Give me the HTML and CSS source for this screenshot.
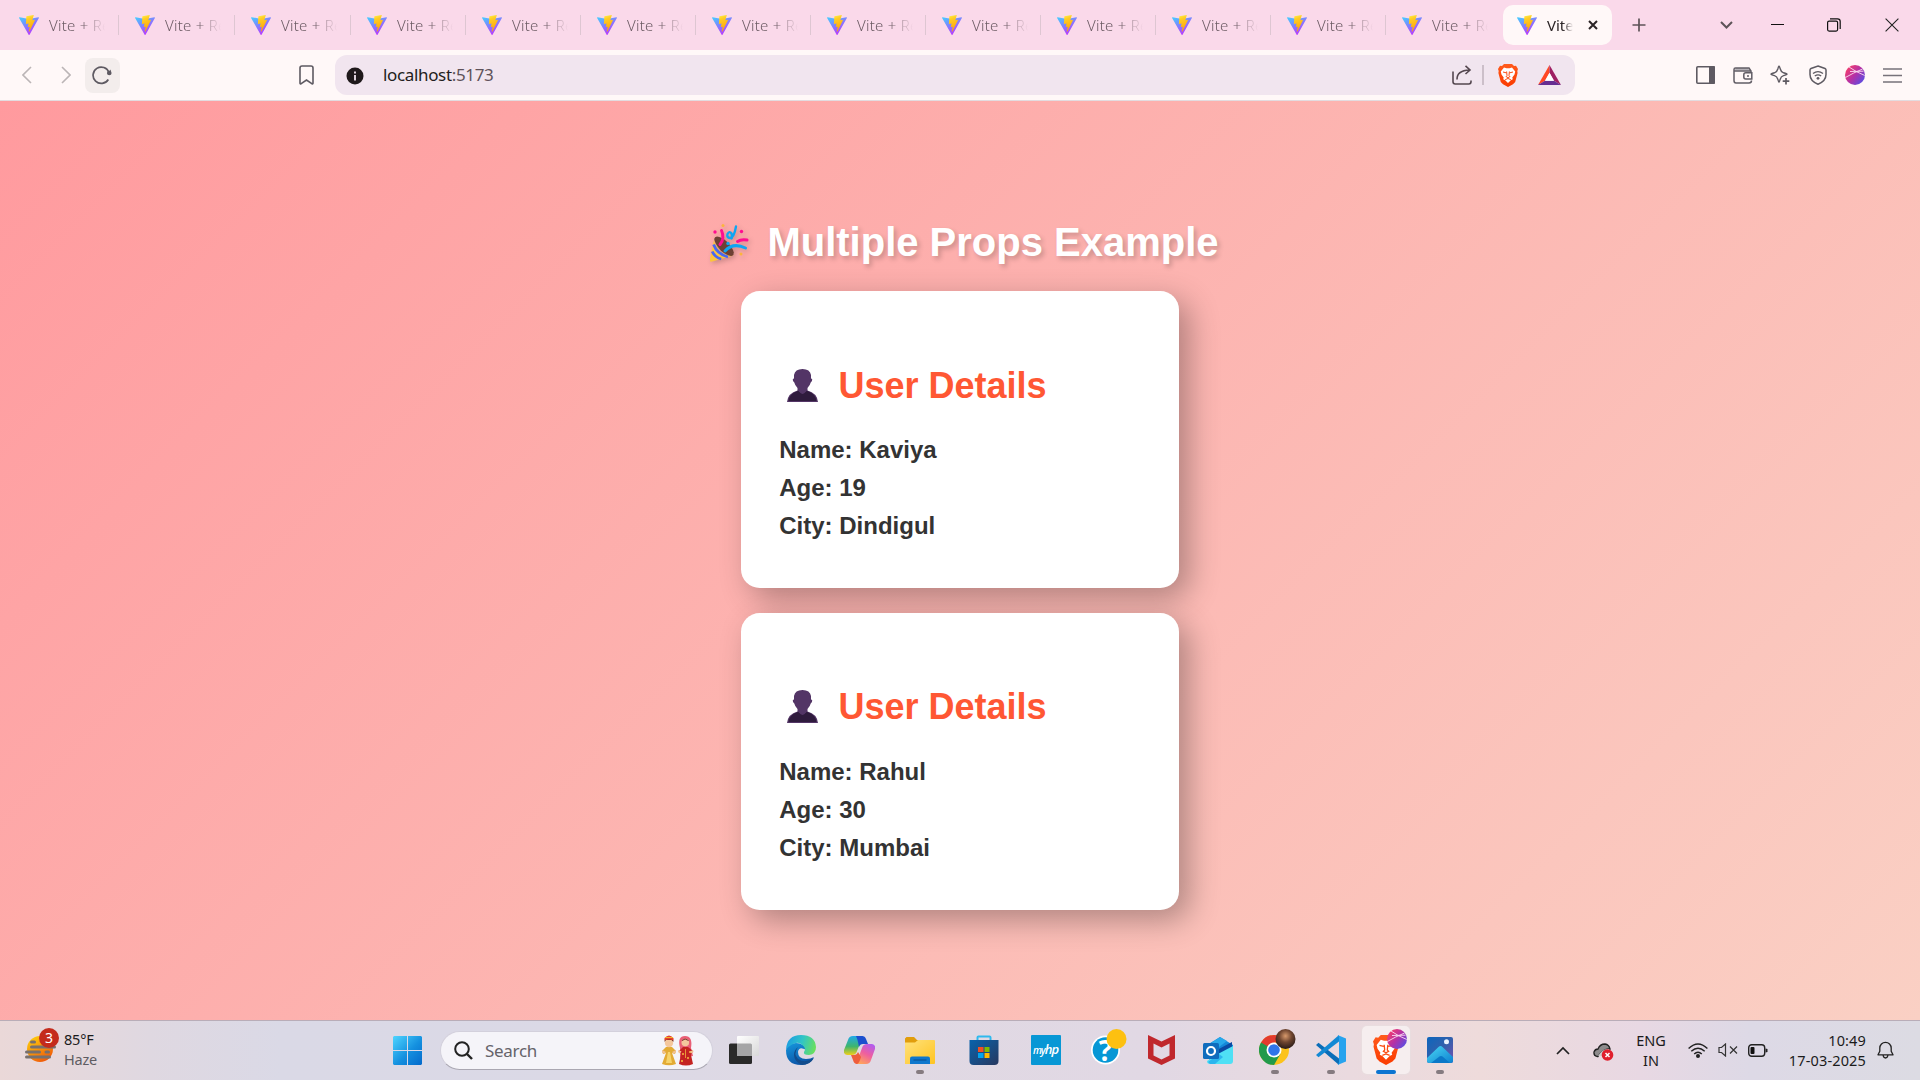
FILE: index.html
```html
<!DOCTYPE html>
<html lang="en">
<head>
<meta charset="utf-8">
<title>Vite + React</title>
<link rel="stylesheet" href="styles.css">
</head>
<body>
<svg class="defs" width="0" height="0" aria-hidden="true">
  <defs>
    <linearGradient id="va" x1="0" y1="0" x2=".6" y2="1"><stop offset="0" stop-color="#41d1ff"/><stop offset="1" stop-color="#bd34fe"/></linearGradient>
    <linearGradient id="vb" x1=".4" y1="0" x2=".6" y2="1"><stop offset="0" stop-color="#ffea40"/><stop offset=".2" stop-color="#ffcd25"/><stop offset="1" stop-color="#ffa000"/></linearGradient>
    <linearGradient id="sph" x1="0" y1=".1" x2="1" y2=".9"><stop offset="0" stop-color="#ff3f62"/><stop offset=".5" stop-color="#b431a6"/><stop offset="1" stop-color="#4b52ee"/></linearGradient>
    <linearGradient id="lionbg" x1="0" y1="0" x2="0" y2="1"><stop offset="0" stop-color="#ff5a1c"/><stop offset="1" stop-color="#fb3b00"/></linearGradient>
    <symbol id="vite" viewBox="0 0 256 257">
      <path fill="url(#va)" d="M255.153 37.938L134.897 252.976c-2.483 4.44-8.862 4.466-11.382.048L.875 37.958c-2.746-4.814 1.371-10.646 6.827-9.67l120.385 21.517a6.537 6.537 0 0 0 2.322-.004l117.867-21.483c5.438-.991 9.574 4.796 6.877 9.62Z"/>
      <path fill="url(#vb)" d="M185.432.063L96.44 17.501a3.268 3.268 0 0 0-2.634 3.014l-5.474 92.456a3.268 3.268 0 0 0 3.997 3.378l24.777-5.718c2.318-.535 4.413 1.507 3.936 3.838l-7.361 36.047c-.495 2.426 1.782 4.5 4.151 3.78l15.304-4.649c2.372-.72 4.652 1.36 4.15 3.788l-11.698 56.621c-.732 3.542 3.979 5.473 5.943 2.437l1.313-2.028l72.516-144.72c1.215-2.423-.88-5.186-3.54-4.672l-25.505 4.922c-2.396.462-4.435-1.77-3.759-4.114l16.646-57.705c.677-2.35-1.37-4.583-3.769-4.113Z"/>
    </symbol>
    <symbol id="lion" viewBox="0 0 20 23">
      <path fill="url(#lionbg)" d="M6 0h8l2 2 2-.3L20 5l-.7 2 .3 2-2.4 9-2.2 2.300L10 23l-5-2.700L2.800 18 .4 9l.3-2L0 5l2-3.300L4 2z"/>
      <path fill="#fff" d="M6 3.600l2.500.7h3l2.500-.7 3.200 4-.7 3-2.200 3 .5 1.600-2 1L10 19l-2.800-2.800-2-1 .5-1.600-2.200-3-.7-3z"/>
      <path fill="none" stroke="#fb4b10" stroke-width="1" d="M5 8l3.200.8M15 8l-3.200.8M8.600 7.500L9 11.500l-1 1 2 1.200 2-1.200-1-1 .4-4M7.200 15.600L10 14.500l2.800 1.100"/>
    </symbol>
    <symbol id="sphere" viewBox="0 0 20 20">
      <circle cx="10" cy="10" r="10" fill="url(#sph)"/>
      <path fill="none" stroke="#fbdcf2" stroke-width=".9" d="M.4 12.500Q8 8 17.500 4M4 2q7 5 15.800 8.500M5 6.500l13.500-.3"/>
    </symbol>
    <symbol id="bust" viewBox="0 0 31 33">
      <path fill="#533566" d="M0 33Q1 24 10.500 21.500V19Q8 16.500 7.300 13.500 5.500 12.500 5.800 10L7 9.500V6Q8 0 15.500 0T24 6v3.500l1.200.5q.3 2.500-1.500 3.500Q23 16.500 20.500 19v2.500Q30 24 31 33z"/>
      <path fill="#2f1b3d" d="M1.500 32Q2.500 24.500 11 21.700l4.500 3.300 4.500-3.300q8.500 2.800 9.500 10.300z"/>
      <path fill="#533566" d="M12 20h7v2.500q-3.500 4.500-7 0z"/>
    </symbol>
  </defs>
</svg>

<div class="screen">
  <header class="tabstrip">
    <div class="tab wide"><svg class="fav"><use href="#vite"/></svg><span class="label">Vite + React</span></div>
    <div class="tab wide"><svg class="fav"><use href="#vite"/></svg><span class="label">Vite + React</span></div>
    <div class="tab wide"><svg class="fav"><use href="#vite"/></svg><span class="label">Vite + React</span></div>
    <div class="tab"><svg class="fav"><use href="#vite"/></svg><span class="label">Vite + React</span></div>
    <div class="tab"><svg class="fav"><use href="#vite"/></svg><span class="label">Vite + React</span></div>
    <div class="tab"><svg class="fav"><use href="#vite"/></svg><span class="label">Vite + React</span></div>
    <div class="tab"><svg class="fav"><use href="#vite"/></svg><span class="label">Vite + React</span></div>
    <div class="tab"><svg class="fav"><use href="#vite"/></svg><span class="label">Vite + React</span></div>
    <div class="tab"><svg class="fav"><use href="#vite"/></svg><span class="label">Vite + React</span></div>
    <div class="tab"><svg class="fav"><use href="#vite"/></svg><span class="label">Vite + React</span></div>
    <div class="tab"><svg class="fav"><use href="#vite"/></svg><span class="label">Vite + React</span></div>
    <div class="tab"><svg class="fav"><use href="#vite"/></svg><span class="label">Vite + React</span></div>
    <div class="tab last"><svg class="fav"><use href="#vite"/></svg><span class="label">Vite + React</span></div>
    <div class="tab active"><svg class="fav"><use href="#vite"/></svg><span class="label">Vite + React</span>
      <svg class="tabclose" viewBox="0 0 10 10"><path d="M1 1l8 8M9 1L1 9" stroke="#2b2426" stroke-width="2" fill="none"/></svg></div>
    <svg class="newtab" viewBox="0 0 14 14"><path d="M7 .5v13M.5 7h13" stroke="#5d5358" stroke-width="1.700"/></svg>
    <div class="winctl">
      <svg width="13" height="8" viewBox="0 0 13 8"><path d="M1 1l5.500 5.500L12 1" fill="none" stroke="#5d5358" stroke-width="2"/></svg>
      <svg class="c-min" width="13" height="13" viewBox="0 0 13 13"><path d="M0 5.500h13" stroke="#111" stroke-width="1"/></svg>
      <svg class="c-max" width="14" height="14" viewBox="0 0 14 14"><rect x=".6" y="3.100" width="10" height="10" rx="1.500" fill="none" stroke="#111" stroke-width="1.200"/><path d="M3 .8h7.500a2.700 2.700 0 0 1 2.700 2.700V11" fill="none" stroke="#111" stroke-width="1.200"/></svg>
      <svg class="c-close" width="14" height="14" viewBox="0 0 14 14"><path d="M.6.6l12.800 12.800M13.400.6L.6 13.400" stroke="#222" stroke-width="1.100"/></svg>
    </div>
  </header>

  <div class="toolbar">
    <svg class="back" width="10" height="18" viewBox="0 0 10 18"><path d="M9 1L1 9l8 8" fill="none" stroke="#bbb5b6" stroke-width="1.600"/></svg>
    <svg class="fwd" width="10" height="18" viewBox="0 0 10 18"><path d="M1 1l8 8-8 8" fill="none" stroke="#bbb5b6" stroke-width="1.600"/></svg>
    <div class="reload"><svg width="21" height="20" viewBox="0 0 21 20"><path d="M16.300 14.500A8.200 8.200 0 1 1 17 7.500" fill="none" stroke="#5e5a62" stroke-width="1.700"/><circle cx="17.300" cy="8" r="2.300" fill="#5e5a62"/><path d="M18.800 4.500v4h-4z" fill="#5e5a62"/></svg></div>
    <svg class="bookmark" width="15" height="20" viewBox="0 0 15 20"><path d="M1 18V3a2 2 0 0 1 2-2h9a2 2 0 0 1 2 2v15q0 1.500-1.200.6L7.500 15l-5.300 3.600Q1 19.500 1 18z" fill="none" stroke="#5e5a62" stroke-width="1.600"/></svg>
    <div class="urlbar">
      <svg class="info" width="18" height="18" viewBox="0 0 18 18"><circle cx="9" cy="9" r="8.500" fill="#1f191b"/><path d="M9 4.500v2M9 8v5.500" stroke="#f1e5ef" stroke-width="1.800"/></svg>
      <span class="url">localhost<span class="port">:5173</span></span>
      <svg class="share" width="20" height="20" viewBox="0 0 20 20"><path d="M1 6.500v10.300Q1 19 3.200 19h13.600q2.200 0 2.200-2.200v-1.300M5 14.500Q4.800 5.500 17.500 5M13.500.8L18 5l-4.500 4" fill="none" stroke="#54474f" stroke-width="1.600"/></svg>
      <i class="vsep"></i>
      <svg class="shield" width="20" height="23"><use href="#lion"/></svg>
      <svg class="bat" width="23" height="20" viewBox="0 0 23 20"><path fill="#ff4724" d="M11.500 0L0 20l7-4.200 4.500-8z"/><path fill="#9e1f63" d="M11.500 0L23 20l-7-4.200-4.500-8z"/><path fill="#662d91" d="M0 20h23l-7-4.200H7z"/><path fill="#fff" d="M11.500 7.800l4.500 8H7z"/></svg>
    </div>
    <svg class="t-side" width="19" height="18" viewBox="0 0 19 18"><rect x=".8" y=".8" width="17.400" height="16.400" rx="1" fill="none" stroke="#5e5a62" stroke-width="1.600"/><path fill="#5e5a62" d="M13 0h5a1 1 0 0 1 1 1v16a1 1 0 0 1-1 1h-5z"/></svg>
    <svg class="t-wallet" width="20" height="17" viewBox="0 0 20 17"><path d="M3 1h12l1.500 2.500H1.500z" fill="#b5b1b7"/><path d="M18 5.500V4L16 1H2.500Q1 1 1 2.500v11Q1 16 3 16h13q2.500 0 2.500-2.500M1 4h17M18.800 5.800h-6a2 2 0 0 0-2 2V10a2 2 0 0 0 2 2h6zM14 9h2" fill="none" stroke="#625e66" stroke-width="1.500"/></svg>
    <svg class="t-spark" width="20" height="20" viewBox="0 0 20 20"><path d="M9 1q.5 0 1.300 3Q11 7 13.500 7.800q3.500.9 3.500 1.400t-3.500 1.400q-2.500.8-3.300 3.600-.7 3-1.200 3t-1.200-3Q7 11.400 4.500 10.600 1 9.700 1 9.200t3.500-1.400Q7 7 7.800 4 8.500 1 9 1z" fill="none" stroke="#5e5a62" stroke-width="1.400"/><path d="M16 13v6.500M12.700 16.200h6.600" stroke="#5e5a62" stroke-width="1.700"/></svg>
    <svg class="t-vpn" width="18" height="20" viewBox="0 0 18 20"><path d="M9 1l7 2.500q1 .5 1 1.500v4.500Q17 16 9 19.200 1 16 1 9.500V5q0-1 1-1.500z" fill="none" stroke="#5e5a62" stroke-width="1.500"/><path d="M4 8.500q5-3.700 10 0M5.800 11q3.200-2.300 6.400 0" fill="none" stroke="#5e5a62" stroke-width="1.400"/><circle cx="9" cy="13.300" r="1.400" fill="#5e5a62"/></svg>
    <svg class="t-avatar" width="20" height="20"><use href="#sphere"/></svg>
    <svg class="t-menu" width="19" height="15" viewBox="0 0 19 15"><path d="M0 1h19M0 7.500h19M0 14h19" stroke="#77727a" stroke-width="1.600"/></svg>
  </div>

  <main class="page">
    <h1><svg class="party" viewBox="0 0 39 39">
        <path fill="#fcc43c" d="M4 16L-.2 36.500q0 1.500 1.500 1.300L23.500 31.500Q9 32 4 16z"/>
        <path fill="none" stroke="#4867f2" stroke-width="2.800" d="M3.600 20.500Q7 30 18 33M2.200 27.500q2.500 5.500 9 7.500"/>
        <path fill="#6d4034" d="M4.200 15Q4.500 12.700 7 12.500q4.500.3 10 5.300 5.500 5.500 6.700 10.500.2 3-1.500 3.500-4 1-11.200-5Q4.500 19.500 4.200 15z"/>
        <path fill="none" stroke="#ff0d90" stroke-width="3" stroke-linecap="round" d="M11.500 6.500q3.500 8-1.500 14M27.500 17.500q3.500-2.500 9.500-1.500"/>
        <path fill="none" stroke="#0ea5f2" stroke-width="3" stroke-linecap="round" d="M15 27q8-9 20.500-3"/>
        <path fill="none" stroke="#0ea5f2" stroke-width="2.400" stroke-linecap="round" d="M26 2.500Q24 14 20 14q-3.500-.5-2.500-4 2-3.500 4-.5 1 4 0 5"/>
        <circle cx="5" cy="8" r="1.700" fill="#ff0d90"/><circle cx="31.500" cy="7.500" r="1.700" fill="#ff0d90"/><circle cx="13" cy="1.600" r="1.500" fill="#fcb43c"/><circle cx="31" cy="30" r="1.500" fill="#fcb43c"/><circle cx="18" cy="19.500" r="1.700" fill="#0ea5f2"/>
      </svg>Multiple Props Example</h1>
    <section class="card first">
      <h2><svg class="person"><use href="#bust"/></svg>User Details</h2>
      <p>Name: Kaviya</p><p>Age: 19</p><p>City: Dindigul</p>
    </section>
    <section class="card">
      <h2><svg class="person"><use href="#bust"/></svg>User Details</h2>
      <p>Name: Rahul</p><p>Age: 30</p><p>City: Mumbai</p>
    </section>
  </main>

  <footer class="taskbar">
    <div class="weather">
      <svg width="34" height="36" viewBox="0 0 34 36"><defs><linearGradient id="sun" x1="0" y1="0" x2=".6" y2="1"><stop offset="0" stop-color="#ffd90c"/><stop offset="1" stop-color="#f05c0a"/></linearGradient></defs>
        <circle cx="15" cy="21" r="13" fill="url(#sun)"/><path d="M6.500 14h3M6.500 19h23M1.500 24h13M21 24h2.500M1.500 29h23" stroke="#77706e" stroke-width="3" stroke-linecap="round"/>
        <circle cx="24" cy="10" r="10" fill="#c42b1c"/><text x="24" y="15" text-anchor="middle" class="badge">3</text></svg>
      <div class="wtext"><span>85°F</span><span class="dim">Haze</span></div>
    </div>
    <svg class="win" width="29" height="29" viewBox="0 0 29 29"><defs><linearGradient id="wg" gradientUnits="userSpaceOnUse" x1="0" y1="0" x2="29" y2="29"><stop offset="0" stop-color="#4fd5ff"/><stop offset=".55" stop-color="#1490df"/><stop offset="1" stop-color="#0469cb"/></linearGradient></defs><path fill="url(#wg)" d="M1 0h13v14H0V1zM15 0h13l1 1v13H15zM0 15h14v14H1l-1-1zM15 15h14v13l-1 1H15z"/></svg>
    <div class="search">
      <svg width="19" height="19" viewBox="0 0 19 19"><circle cx="8" cy="8" r="6.800" fill="none" stroke="#222" stroke-width="2"/><path d="M13 13l5 5" stroke="#222" stroke-width="2.400"/></svg>
      <span>Search</span>
      <svg class="couple" width="33" height="31" viewBox="0 0 33 31">
        <path fill="#e3ab35" d="M5 12h6l4 4-1 3-3-1 4 11q-7 2.500-14 0l4-11-3 1-1-3z"/><path fill="#f6d36b" d="M7 17h2l2 11H5z"/><path fill="#f2c091" d="M1 15l4 2-2 2-2-2zM15 15l-4 2 2 2 2-2z"/><circle cx="8" cy="8" r="4.200" fill="#f4c79d"/><path fill="#5a2619" d="M3.500 7q0-5 4.500-5t4.500 5l-2-2H5z"/><path fill="#e6402c" d="M3.500 3Q8-2 12.500 3v2.500q-4.500-2-9 0z"/><path d="M4 2.500h8" stroke="#f0b32b"/>
        <path fill="#e95f76" d="M19 13q-3-12 5-12t6 12l2 8-13 2z"/><path fill="#c42321" d="M22 12h5l5 4-2 4 2 9q-7 3-14 0l2-10-2-3z"/><circle cx="24.300" cy="7.500" r="3.800" fill="#f4c79d"/><path fill="none" stroke="#703029" d="M21 5.500q3-3 6.500 0"/><path fill="#e9943a" d="M21 18h2v2h-2zM26 22h2v2h-2zM20 25h2v2h-2zM28 16h2v2h-2zM24 14h1v9h-1z"/><path fill="#f2c091" d="M17.500 15l3 1.500-1.500 2-2-1.500zM32 15l-3 1.500 1 2 2.500-1.500z"/>
      </svg>
    </div>

    <div class="app a-view"><svg width="30" height="30" viewBox="0 0 30 30"><defs><linearGradient id="tv" x1="0" y1="0" x2="1" y2="1"><stop offset="0" stop-color="#fff"/><stop offset="1" stop-color="#d8d8d8"/></linearGradient></defs><rect x="0" y="8.500" width="23" height="20.500" rx="1.500" fill="#2a2a29"/><rect x="8" y="1" width="22" height="20" rx="1" fill="url(#tv)"/><path fill="#a5a5a6" d="M8 8.500h13.500q1.500 0 1.500 1.500v11H8z"/></svg></div>
    <div class="app a-edge"><svg width="30" height="30" viewBox="0 0 30 30"><defs><linearGradient id="e1" x1="0" y1=".4" x2="1" y2=".6"><stop offset="0" stop-color="#1c9de2"/><stop offset=".5" stop-color="#31c5c6"/><stop offset="1" stop-color="#6ce05a"/></linearGradient><linearGradient id="e2" x1="0" y1="0" x2=".4" y2="1"><stop offset="0" stop-color="#1597dd"/><stop offset="1" stop-color="#0b55a8"/></linearGradient></defs>
      <path fill="url(#e2)" d="M0 15Q2 8 10 8t12 8q-9-6-10 1 0 7 8 7 5 0 8-2-4 8-13 8Q0 30 0 15z"/><path fill="#124c8c" d="M12 12q-5 7 0 12 7 5 16-1-4 7-12 7Q8 26 8 20q0-5 4-8z"/><path fill="url(#e1)" d="M0 14.500Q1 0 15 0q14 0 15 12 0 7-7 8-6 0-5-3 3-4-3-8T0 14.500z"/></svg></div>
    <div class="app a-copilot"><svg width="31" height="28" viewBox="0 0 31 28"><defs><linearGradient id="c1" x1=".3" y1="0" x2=".3" y2="1"><stop offset="0" stop-color="#1fa9ea"/><stop offset=".55" stop-color="#3fb56c"/><stop offset="1" stop-color="#f0cf1a"/></linearGradient><linearGradient id="c2" x1=".8" y1="0" x2=".3" y2="1"><stop offset="0" stop-color="#b15cf0"/><stop offset=".5" stop-color="#ee5f9f"/><stop offset="1" stop-color="#ffa35c"/></linearGradient></defs>
      <path fill="url(#c1)" d="M9 0h10l-6 15q-1 4-5 4H3q-4-1-3-5L4 4Q5 0 9 0z"/><path fill="#1c4fce" d="M12 0h6q3 0 4 3l2 5h-5q-3 0-4 3l-1-5q-1-4-2-6z"/><path fill="url(#c2)" d="M22 28H12l6-16q1-4 5-4h5q4 1 3 5l-4 11q-1 4-5 4z"/><path fill="#ee5d3c" d="M7 19h3q3 0 4-3l3 5q-2 7-4 7-3 0-4-4z"/></svg></div>
    <div class="app a-files running"><svg width="30" height="27" viewBox="0 0 30 27"><defs><linearGradient id="fo" x1="0" y1="0" x2="1" y2="1"><stop offset="0" stop-color="#ffe17b"/><stop offset="1" stop-color="#ffc421"/></linearGradient></defs><path fill="#e19d0c" d="M1.500 0H9l3 3h17v6H0V1.500z"/><path fill="url(#fo)" d="M0 5.500h10L13 3h16q1 0 1 1v22q0 1-1 1H0z"/><path fill="#0f77cd" d="M5 27v-5.500q0-2 2-2h16q2 0 2 2V27z"/><path d="M8.500 23h13" stroke="#0a4c8c"/></svg></div>
    <div class="app a-store"><svg width="30" height="30" viewBox="0 0 30 30"><defs><linearGradient id="st" x1="0" y1="0" x2="1" y2="1"><stop offset="0" stop-color="#0963ac"/><stop offset="1" stop-color="#28385f"/></linearGradient></defs><path d="M8.500 7V2.500q0-1 1-1h11q1 0 1 1V7" fill="none" stroke="#2fb9ee" stroke-width="2"/><path fill="url(#st)" d="M.5 5h29v21q0 4-4 4h-21q-4 0-4-4z"/><path fill="#f25022" d="M9 12h5.500v5H9z"/><path fill="#7fba00" d="M15.500 12H20.500v5h-5z"/><path fill="#00a4ef" d="M9 18h5.500v5H9z"/><path fill="#ffb900" d="M15.500 18H20.500v5h-5z"/></svg></div>
    <div class="app a-hp"><div class="myhp"><small>my</small>hp</div></div>
    <div class="app a-help"><svg width="36" height="36" viewBox="0 0 36 36"><circle cx="14.500" cy="21" r="14.500" fill="#fff"/><circle cx="14.500" cy="21" r="12.800" fill="#0797d5"/><text x="14.500" y="31.500" text-anchor="middle" class="qmark">?</text><circle cx="25.500" cy="10" r="10" fill="#fdc010"/></svg></div>
    <div class="app a-mcafee"><svg width="27" height="30" viewBox="0 0 27 30"><path fill="#c0282d" fill-rule="evenodd" d="M0 0l13.500 6.500L27 0v23.500L13.500 30 0 23.500zM5.500 8.500v12l8 4 8-4v-12l-8 4z"/></svg></div>
    <div class="app a-outlook"><svg width="30" height="27" viewBox="0 0 30 27"><path fill="#1489d8" d="M4 8L17 0l13 8v14l-13 5H7z"/><path fill="#28a8ea" d="M5 8L17 0l7 4L12 13z"/><path fill="#0a4aa3" d="M12 14L29 5v6l-14 8z"/><path fill="#4fe0f5" d="M13 18l17-9v15q0 3-3 3H7q-3 0-3-3z"/><path fill="#2bb5ee" d="M5 25l11-8 4 3-8 7H7z"/><rect y="6" width="16" height="16" rx="1.500" fill="#0f6cbd"/><circle cx="8" cy="14" r="4" fill="none" stroke="#fff" stroke-width="2.200"/></svg></div>
    <div class="app a-chrome running"><svg width="37" height="36" viewBox="0 0 37 36"><defs><radialGradient id="pf" cx=".5" cy=".35" r=".7"><stop offset="0" stop-color="#d89a6c"/><stop offset=".45" stop-color="#6f452f"/><stop offset="1" stop-color="#1d1414"/></radialGradient></defs>
      <circle cx="15" cy="21" r="15" fill="#fcc31c"/><path fill="#e33b2e" d="M2 13.500A15 15 0 0 1 28 13.500H15L8.500 24.700z"/><path fill="#229a4b" d="M2 13.500A15 15 0 0 0 15 36l6.500-11.300L15 21z"/><circle cx="15" cy="21" r="7.500" fill="#fff"/><circle cx="15" cy="21" r="5.800" fill="#2f74ea"/><circle cx="26.500" cy="10" r="10" fill="url(#pf)"/></svg></div>
    <div class="app a-code running"><svg width="30" height="30" viewBox="0 0 30 30"><path fill="#0a6db8" d="M0 10l2.500-2.300L23 23.500V30z"/><path fill="#1389d4" d="M0 20l2.500 2.300L23 6.500V0z"/><path fill="#27a3ee" d="M21.500 0L30 3.500v23L21.500 30q1.500-1 1.500-3V3q0-2-1.500-3z"/></svg></div>
    <div class="app a-brave current"><svg width="34" height="36" viewBox="0 0 34 36"><use href="#lion" x="0" y="6" width="26" height="30"/><use href="#sphere" x="14" y="0" width="20" height="20"/></svg></div>
    <div class="app a-photos running"><svg width="26" height="26" viewBox="0 0 26 26"><defs><linearGradient id="ph" x1="0" y1="0" x2="1" y2="1"><stop offset="0" stop-color="#0c66bd"/><stop offset=".5" stop-color="#3260ac"/><stop offset="1" stop-color="#7a50b0"/></linearGradient><linearGradient id="ph2" x1="0" y1="0" x2="1" y2="1"><stop offset="0" stop-color="#4ad8f5"/><stop offset="1" stop-color="#0d80d0"/></linearGradient></defs><rect width="26" height="26" rx="2" fill="url(#ph)"/><path fill="url(#ph2)" d="M0 21L11.500 10q2-2 4 0L26 20v4q0 2-2 2H2q-2 0-2-2z"/><path fill="#0b78c8" d="M4 26l8.500-6.500q1.500-1 3 0L23 26z"/><circle cx="19.500" cy="4.700" r="2.500" fill="#eaf4ff"/></svg></div>

    <svg class="chev" width="14" height="9" viewBox="0 0 14 9"><path d="M1 8l6-6 6 6" fill="none" stroke="#222" stroke-width="1.700"/></svg>
    <svg class="cloud" width="21" height="18" viewBox="0 0 21 18"><path d="M4 13.500Q.5 12.500 1 9q1-3 4-3Q7 1 12 1q4 .5 5 5-6-1-12 7.500z" fill="#8d8b8c" stroke="#222" stroke-width="1.300"/><path d="M5 13Q10 5 16 6v7z" fill="#ccc"/><circle cx="14.500" cy="12" r="5.800" fill="#e01f2d"/><path d="M12.500 10l4 4M16.500 10l-4 4" stroke="#fff" stroke-width="1.500"/></svg>
    <div class="lang"><span>ENG</span><span>IN</span></div>
    <svg class="wifi" width="20" height="15" viewBox="0 0 20 15"><path d="M.6 5.500Q10-3.500 19.400 5.500M3.300 8.300q6.700-6.200 13.400 0M6.200 11q3.800-3.500 7.600 0" fill="none" stroke="#222" stroke-width="1.400"/><circle cx="10" cy="13" r="2" fill="#222"/></svg>
    <svg class="vol" width="20" height="14" viewBox="0 0 20 14"><path d="M1 4.500h2.500L7.500 1v12L3.500 9.500H1z" fill="none" stroke="#333" stroke-width="1.200"/><path d="M12 3.500l7 7M19 3.500l-7 7" stroke="#333" stroke-width="1.200"/></svg>
    <svg class="batt" width="20" height="13" viewBox="0 0 20 13"><rect x=".7" y=".7" width="16" height="11.600" rx="3" fill="none" stroke="#222" stroke-width="1.400"/><rect x="2.500" y="3" width="4" height="7" rx="1" fill="#111"/><path fill="#222" d="M17.500 4.500l2 .5v3l-2 .5z"/></svg>
    <div class="clock"><span>10:49</span><span>17-03-2025</span></div>
    <svg class="bell" width="17" height="18" viewBox="0 0 17 18"><path d="M1 13.800l1.800-3.600V7a5.700 5.700 0 0 1 11.400 0v3.200L16 13.800zM6 14q.5 3 2.500 3t2.500-3" fill="none" stroke="#222" stroke-width="1.300" stroke-linejoin="round"/></svg>
  </footer>
</div>
</body>
</html>
```
FILE: styles.css
```css
* { box-sizing: border-box; }
body { margin: 0; font-family: "Noto Sans", "Open Sans", sans-serif; overflow: hidden; }
svg { display: block; flex: none; }
.defs { height: 0; }
.screen { width: 1920px; height: 1080px; display: flex; flex-direction: column; }

/* tab strip */
.tabstrip { height: 50px; background: #fad9ea; display: flex; align-items: center; padding-left: 3px; }
.tab { width: 115px; height: 40px; padding-left: 16px; display: flex; align-items: center; flex: none;
  background: linear-gradient(#dec6d2, #dec6d2) right center / 1.500px 20px no-repeat; }
.tab.wide { width: 116px; }
.tab.last { width: 117px; background: none; }
.fav { width: 20px; height: 20px; }
.label { width: 56px; margin-left: 10px; overflow: hidden; white-space: nowrap; font-size: 15px; font-weight: 300; letter-spacing: .25px; color: #6d5c65;
  -webkit-mask-image: linear-gradient(90deg, #000 60%, transparent); mask-image: linear-gradient(90deg, #000 60%, transparent); }
.tab.active { width: 109px; background: #fff8f8; border-radius: 10px; padding-left: 14px; }
.tab.active .label { width: 26px; color: #2b2426; font-weight: 400; letter-spacing: 0; }
.tabclose { width: 10px; height: 10px; margin-left: 15px; }
.newtab { width: 14px; height: 14px; margin-left: 20px; }
.winctl { display: flex; align-items: center; margin-left: 74px; }
.c-min { margin-left: 38px; }
.c-max { margin-left: 43px; }
.c-close { margin-left: 44px; }

/* toolbar */
.toolbar { height: 51px; background: #fff8f8; border-bottom: 1px solid #e3dce0; display: flex; align-items: center; }
.back { margin-left: 22px; }
.fwd { margin-left: 29px; }
.reload { width: 35px; height: 35px; border-radius: 8px; background: #f3edec; margin-left: 14px; display: flex; align-items: center; justify-content: center; }
.bookmark { margin-left: 179px; }
.urlbar { width: 1240px; height: 40px; margin-left: 21px; border-radius: 12px; background: #f1e5ef; display: flex; align-items: center; padding-left: 11px; }
.url { margin-left: 19px; font-size: 17px; color: #231d20; line-height: 24px; width: 1069px; padding-bottom: 1px; letter-spacing: -.35px; }
.port { color: #5e5259; }
.info { margin-top: 2px; }
.vsep { width: 1.500px; height: 20px; background: #ccbfc9; margin-left: 10px; }
.shield { margin-left: 14px; }
.bat { margin-left: 20.500px; }
.t-side { margin-left: 121px; }
.t-wallet { margin-left: 17.500px; }
.t-spark { margin-left: 17.500px; }
.t-vpn { margin-left: 18.500px; }
.t-avatar { margin-left: 18.500px; }
.t-menu { margin-left: 17.500px; }

/* page */
.page { height: 919px; padding-top: 111px; display: flex; flex-direction: column; align-items: center;
  background: linear-gradient(135deg, #ff9a9e, #fad0c4); font-family: "Liberation Sans", Arial, sans-serif; }
h1 { margin: 0 0 19px; display: flex; align-items: center; height: 60px; font-size: 40px; line-height: 60px; color: #fff;
  text-shadow: 2.500px 2.500px 5px rgba(0,0,0,.2); white-space: nowrap; }
.party { width: 39px; height: 39px; margin: 2px 18.500px 0 8.500px; filter: drop-shadow(2.500px 2.500px 2.500px rgba(0,0,0,.2)); }
.card { width: 438px; height: 297px; flex: none; margin-bottom: 25px; background: #fff; border-radius: 18.750px; padding: 67px 37px 0 38.250px;
  box-shadow: 10px 10px 31px rgba(0,0,0,.3); }
.card.first { padding-top: 68px; }
.card.first h2 { margin-bottom: 18px; }
h2 { margin: 0 0 19px; height: 54px; display: flex; align-items: center; font-size: 36px; line-height: 54px; color: #ff5733; white-space: nowrap; }
.person { width: 31px; height: 33px; margin: -1px 20.250px 0 8px; }
.card p { margin: 0; font-size: 24px; font-weight: 700; line-height: 38px; color: #333; }

/* taskbar */
.taskbar { height: 60px; border-top: 1px solid #b9adb8; padding-bottom: 1px; display: flex; align-items: center; color: #1b1b1b; font-size: 14.500px;
  background: linear-gradient(90deg, #ead8d8 0, #dfd8e1 150px, #dad9e6 280px, #dbd9e6 600px, #e0d9e3 850px, #e1d8e4 1150px, #eadadf 1350px, #eedbdb 1480px, #e8d8e3 1640px, #ddd9e6 1750px, #dcdbe3 1920px); }
.weather { width: 140px; margin-left: 25px; display: flex; }
.weather svg { margin-top: -4px; }
.wtext { display: flex; flex-direction: column; margin-left: 5px; line-height: 20px; margin-top: -3px; letter-spacing: -.2px; }
.dim { color: #5f5c62; }
.badge { fill: #fff; font-size: 14px; }
.win { margin-left: 228px; }
.search { width: 273px; height: 39px; border-radius: 20px; margin-left: 18px; background: #f5f4f9; border: 1px solid #d3d0dc; border-bottom-color: #aaa7b2;
  display: flex; align-items: center; padding-left: 13px; color: #65636a; font-size: 17px; }
.search span { margin-left: 12px; width: 176px; letter-spacing: -.3px; }
.app { width: 48px; height: 48px; flex: none; display: flex; align-items: center; justify-content: center; position: relative; border-radius: 5px; }
.a-view { margin-left: 7px; }
.a-edge { margin-left: 9px; }
.a-copilot { margin-left: 10px; }
.a-files { margin-left: 13px; }
.a-store { margin-left: 16px; }
.a-hp { margin-left: 13.500px; }
.a-help { margin-left: 11.500px; padding: 0 0 6px 7px; }
.a-mcafee { margin-left: 8px; }
.a-outlook { margin-left: 9px; }
.a-chrome { margin-left: 9px; padding: 0 0 6px 5px; }
.a-code { margin-left: 8px; }
.a-brave { margin-left: 7px; padding: 0 0 6px 8px; }
.a-photos { margin-left: 6px; }
.running::after, .current::after { content: ""; position: absolute; bottom: 0; left: 20px; width: 8px; height: 4px; border-radius: 2px; background: #857b80; }
.current { background: #f6eeef; box-shadow: 0 0 0 1px #e9dddf; }
.current::after { left: 14px; width: 20px; background: #0b74d1; }
.myhp { width: 30px; height: 30px; background: #0797d5; border-radius: 1px; color: #fff; font: italic 600 13px/28px "Open Sans", sans-serif; letter-spacing: -1px; text-align: center; white-space: nowrap; }
.myhp small { font-size: 10px; font-weight: 600; }
.qmark { fill: #fff; font-family: "Open Sans", sans-serif; font-weight: 700; font-size: 28px; }
.chev { margin-left: 92px; }
.cloud { margin-left: 23px; margin-top: 4px; }
.lang, .clock { display: flex; flex-direction: column; line-height: 20px; margin-top: -1px; }
.lang { width: 40px; margin-left: 17px; align-items: center; }
.wifi { margin-left: 17px; }
.vol { margin-left: 10px; }
.batt { margin-left: 10px; }
.clock { width: 88px; margin-left: 10px; align-items: flex-end; white-space: nowrap; letter-spacing: .15px; }
.bell { margin-left: 11px; }
```
